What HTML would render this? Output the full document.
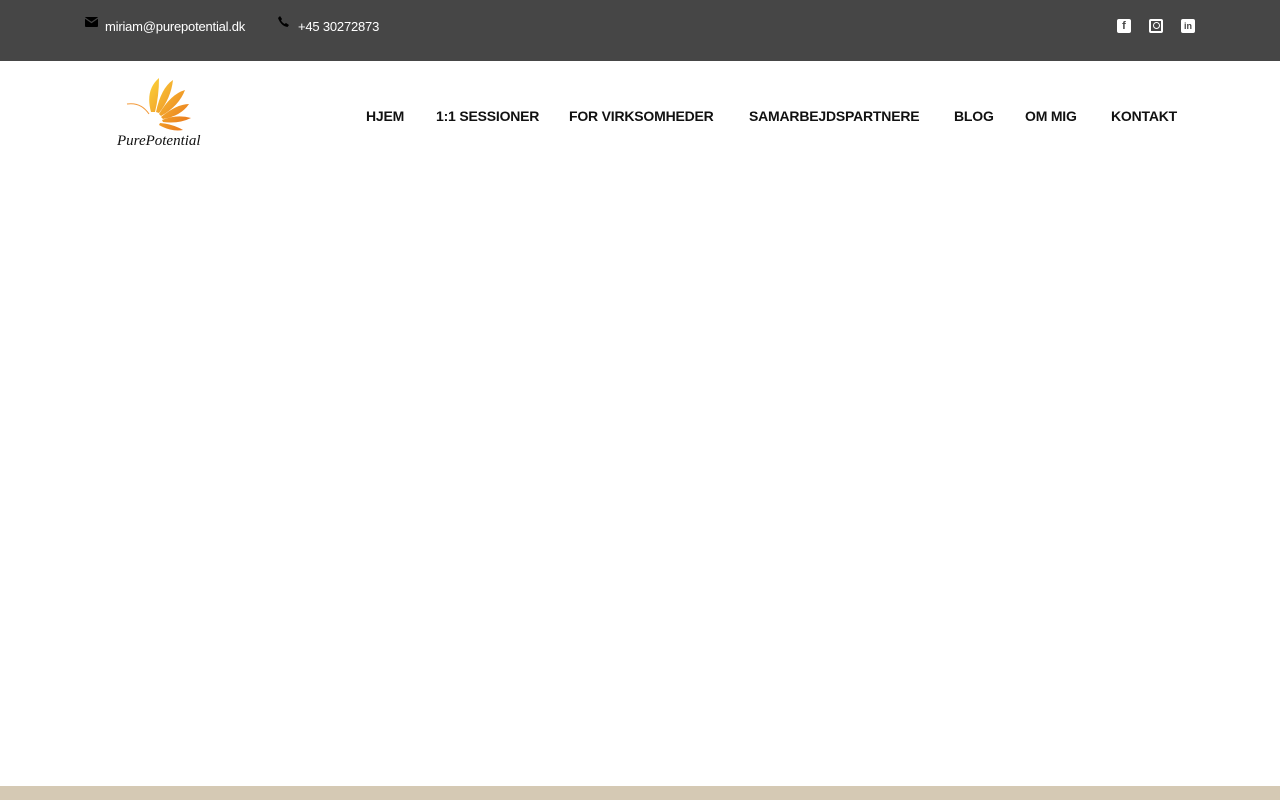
<!DOCTYPE html>
<html><head><meta charset="utf-8"><style>
body{margin:0;width:1280px;height:800px;position:relative;background:#fff;font-family:"Liberation Sans",sans-serif;overflow:hidden}
.top{position:absolute;left:0;top:0;width:1280px;height:61px;background:#464646}
.t{position:absolute;top:19px;color:#fff;font-size:13px;letter-spacing:-0.2px}
.nav{position:absolute;top:108px;font-size:14px;font-weight:bold;color:#111;letter-spacing:-0.2px}
.nav span{position:absolute;white-space:nowrap}
.foot{position:absolute;left:0;top:786px;width:1280px;height:14px;background:#d5c9b4}
.ic{position:absolute;top:19px;width:14px;height:14px;background:#fff;border-radius:2px;color:#464646;font-size:11px;font-weight:bold;text-align:center;line-height:15px}
</style></head><body>
<div class="top">
<svg style="position:absolute;left:85px;top:17px" width="13" height="10" viewBox="0 0 13 10"><rect width="13" height="10" rx="1" fill="#000"/><path d="M0 1 L6.5 5.5 L13 1" stroke="#464646" stroke-width="1.2" fill="none"/></svg>
<div class="t" style="left:105px">miriam@purepotential.dk</div>
<svg style="position:absolute;left:278px;top:16px" width="11" height="11" viewBox="0 0 11 11"><path d="M2 0 L4 3 L3 4.5 Q4.5 7 6.5 8 L8 7 L11 9 L9.5 11 Q3 10 0 2 Z" fill="#000"/></svg>
<div class="t" style="left:298px">+45 30272873</div>
<div class="ic" style="left:1117px">f</div>
<div class="ic" style="left:1149px;background:none;border:2px solid #fff;width:10px;height:10px;top:19px"><div style="width:5px;height:5px;border:1.5px solid #fff;border-radius:50%;margin:1px auto"></div></div>
<div class="ic" style="left:1181px;font-size:9px">in</div>
</div>
<svg style="position:absolute;left:115px;top:72px" width="92" height="78" viewBox="0 0 92 78">
<defs><linearGradient id="g" x1="0" y1="0" x2="1" y2="1"><stop offset="0" stop-color="#fbd23a"/><stop offset="1" stop-color="#e8701a"/></linearGradient></defs>
<path d="M36 40 Q30 18 44 6 Q44 24 40 40Z M41 40 Q46 16 58 8 Q56 26 44 41Z M44 42 Q56 22 70 18 Q64 34 46 44Z M46 45 Q62 32 74 32 Q66 44 48 47Z M47 48 Q62 42 76 46 Q64 52 48 50Z M45 51 Q58 52 68 58 Q56 60 44 53Z" fill="url(#g)"/>
<path d="M34 42 Q26 30 12 32" stroke="#f39a3a" fill="none"/>
<text x="2" y="73" font-family="Liberation Serif,serif" font-style="italic" font-size="15" fill="#111">PurePotential</text>
</svg>
<div class="nav">
<span style="left:366px">HJEM</span><span style="left:436px">1:1 SESSIONER</span><span style="left:569px">FOR VIRKSOMHEDER</span><span style="left:749px">SAMARBEJDSPARTNERE</span><span style="left:954px">BLOG</span><span style="left:1025px">OM MIG</span><span style="left:1111px">KONTAKT</span>
</div>
<div class="foot"></div>
</body></html>
